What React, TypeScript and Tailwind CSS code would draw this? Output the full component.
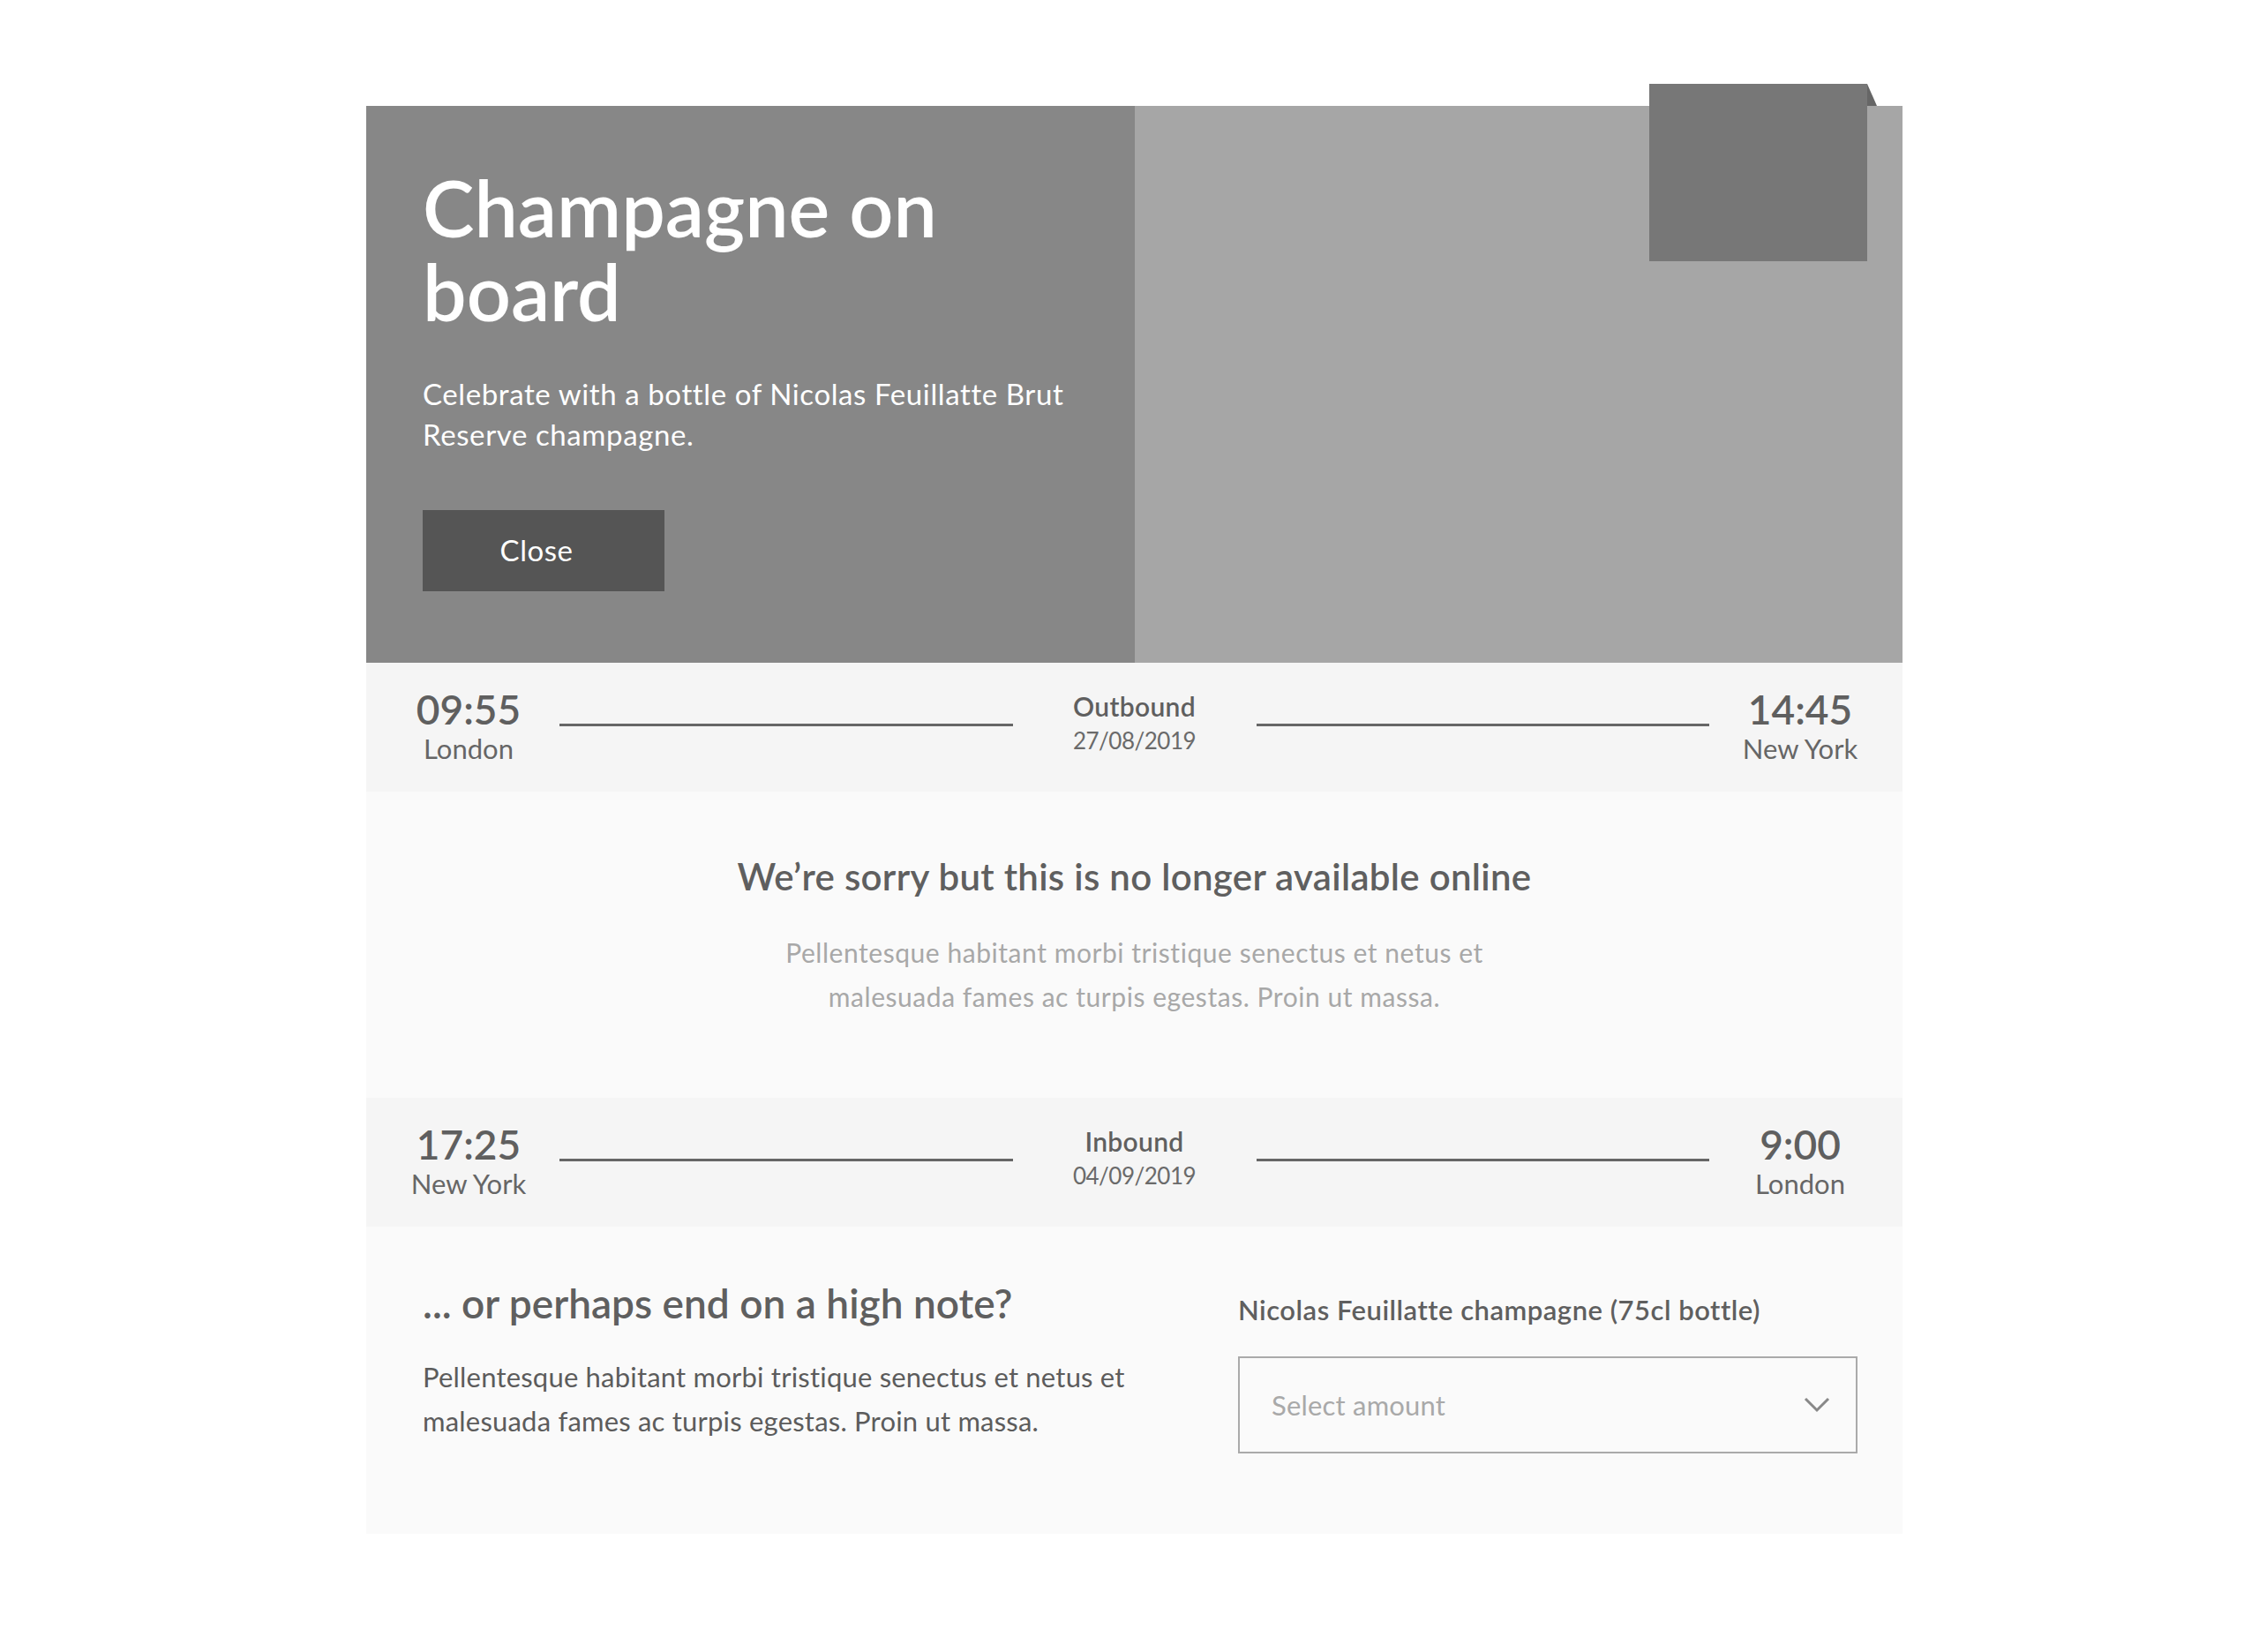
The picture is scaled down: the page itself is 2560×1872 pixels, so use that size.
import React from 'react';

type Leg = {
  fromTime: string;
  fromCity: string;
  label: string;
  date: string;
  toTime: string;
  toCity: string;
};

function FlightBand({ leg }: { leg: Leg }) {
  return (
    <div className="flex h-[146px] items-start gap-[33px] bg-[#f5f5f5] px-[46px] text-[#5f5f5f]">
      {/* departure */}
      <div className="w-[140px] pt-[30px] text-center">
        <div className="text-[46px] font-semibold leading-[46px]">{leg.fromTime}</div>
        <div className="mt-[4px] text-[31px] leading-[34px] text-[#666]">{leg.fromCity}</div>
      </div>
      <div className="mt-[69px] h-[3px] flex-1 bg-[#666]" />
      {/* direction */}
      <div className="w-[210px] pt-[32px] text-center">
        <div className="text-[30px] font-semibold leading-[34px] tracking-[0.3px]">{leg.label}</div>
        <div className="mt-[5px] text-[26px] leading-[34px] tracking-[-0.5px] text-[#6a6a6a]">{leg.date}</div>
      </div>
      <div className="mt-[69px] h-[3px] flex-1 bg-[#666]" />
      {/* arrival */}
      <div className="w-[140px] pt-[30px] text-center">
        <div className="text-[46px] font-semibold leading-[46px]">{leg.toTime}</div>
        <div className="mt-[4px] text-[31px] leading-[34px] text-[#666]">{leg.toCity}</div>
      </div>
    </div>
  );
}

export default function App() {
  return (
    <div className="min-h-screen bg-white pt-[120px] pb-[134px] font-['Lato',_sans-serif]">
      <div className="ml-[415px] w-[1741px]">
        {/* Hero */}
        <div className="flex h-[631px]">
          <div className="w-1/2 bg-[#878787] pl-[64px] pt-[68px] text-white">
            <h1 className="text-[88px] font-semibold leading-[95px]">
              Champagne on
              <br />
              board
            </h1>
            <p className="mt-[45px] text-[33px] leading-[46px] tracking-[0.6px]">
              Celebrate with a bottle of Nicolas Feuillatte Brut
              <br />
              Reserve champagne.
            </p>
            <button className="mt-[63px] flex h-[92px] w-[274px] items-center justify-center bg-[#555] pr-[16px] text-[33px] tracking-[0.5px] text-white">
              Close
            </button>
          </div>
          <div className="relative flex-1 bg-[#a6a6a6]">
            <div className="absolute -top-[25px] right-[40px] h-[201px] w-[247px] bg-[#777]">
              <svg className="absolute left-full top-0" width="11" height="25" viewBox="0 0 11 25">
                <polygon points="0,0 11,25 0,25" fill="#666" />
              </svg>
            </div>
          </div>
        </div>

        <FlightBand
          leg={{
            fromTime: '09:55',
            fromCity: 'London',
            label: 'Outbound',
            date: '27/08/2019',
            toTime: '14:45',
            toCity: 'New York',
          }}
        />

        {/* Unavailable notice */}
        <div className="h-[347px] bg-[#fafafa] pt-[71px] text-center">
          <h2 className="text-[42px] font-semibold leading-[50px] tracking-[0.3px] text-[#5f5f5f]">
            We’re sorry but this is no longer available online
          </h2>
          <p className="mt-[36px] text-[30px] leading-[50px] tracking-[0.55px] text-[#a8a8a8]">
            Pellentesque habitant morbi tristique senectus et netus et
            <br />
            malesuada fames ac turpis egestas. Proin ut massa.
          </p>
        </div>

        <FlightBand
          leg={{
            fromTime: '17:25',
            fromCity: 'New York',
            label: 'Inbound',
            date: '04/09/2019',
            toTime: '9:00',
            toCity: 'London',
          }}
        />

        {/* Upsell */}
        <div className="flex h-[348px] bg-[#fafafa] pl-[64px] pr-[51px]">
          <div className="flex-1 pt-[60px]">
            <h2 className="text-[46px] font-semibold leading-[54px] text-[#5f5f5f]">
              ... or perhaps end on a high note?
            </h2>
            <p className="mt-[31px] text-[31px] leading-[50px] tracking-[0.2px] text-[#5c5c5c]">
              Pellentesque habitant morbi tristique senectus et netus et
              <br />
              malesuada fames ac turpis egestas. Proin ut massa.
            </p>
          </div>
          <div className="w-[702px] pt-[74px]">
            <label className="block text-[31px] font-semibold leading-[40px] tracking-[0.5px] text-[#5f5f5f]">
              Nicolas Feuillatte champagne (75cl bottle)
            </label>
            <div className="mt-[33px] flex h-[110px] items-center justify-between border-2 border-[#aaa] pl-[36px] pr-[29px]">
              <span className="text-[31px] tracking-[0.2px] text-[#a9a9a9]">Select amount</span>
              <svg width="30" height="18" viewBox="0 0 30 18" fill="none">
                <polyline points="2,2 15,15 28,2" stroke="#888" strokeWidth="3" />
              </svg>
            </div>
          </div>
        </div>
      </div>
    </div>
  );
}
